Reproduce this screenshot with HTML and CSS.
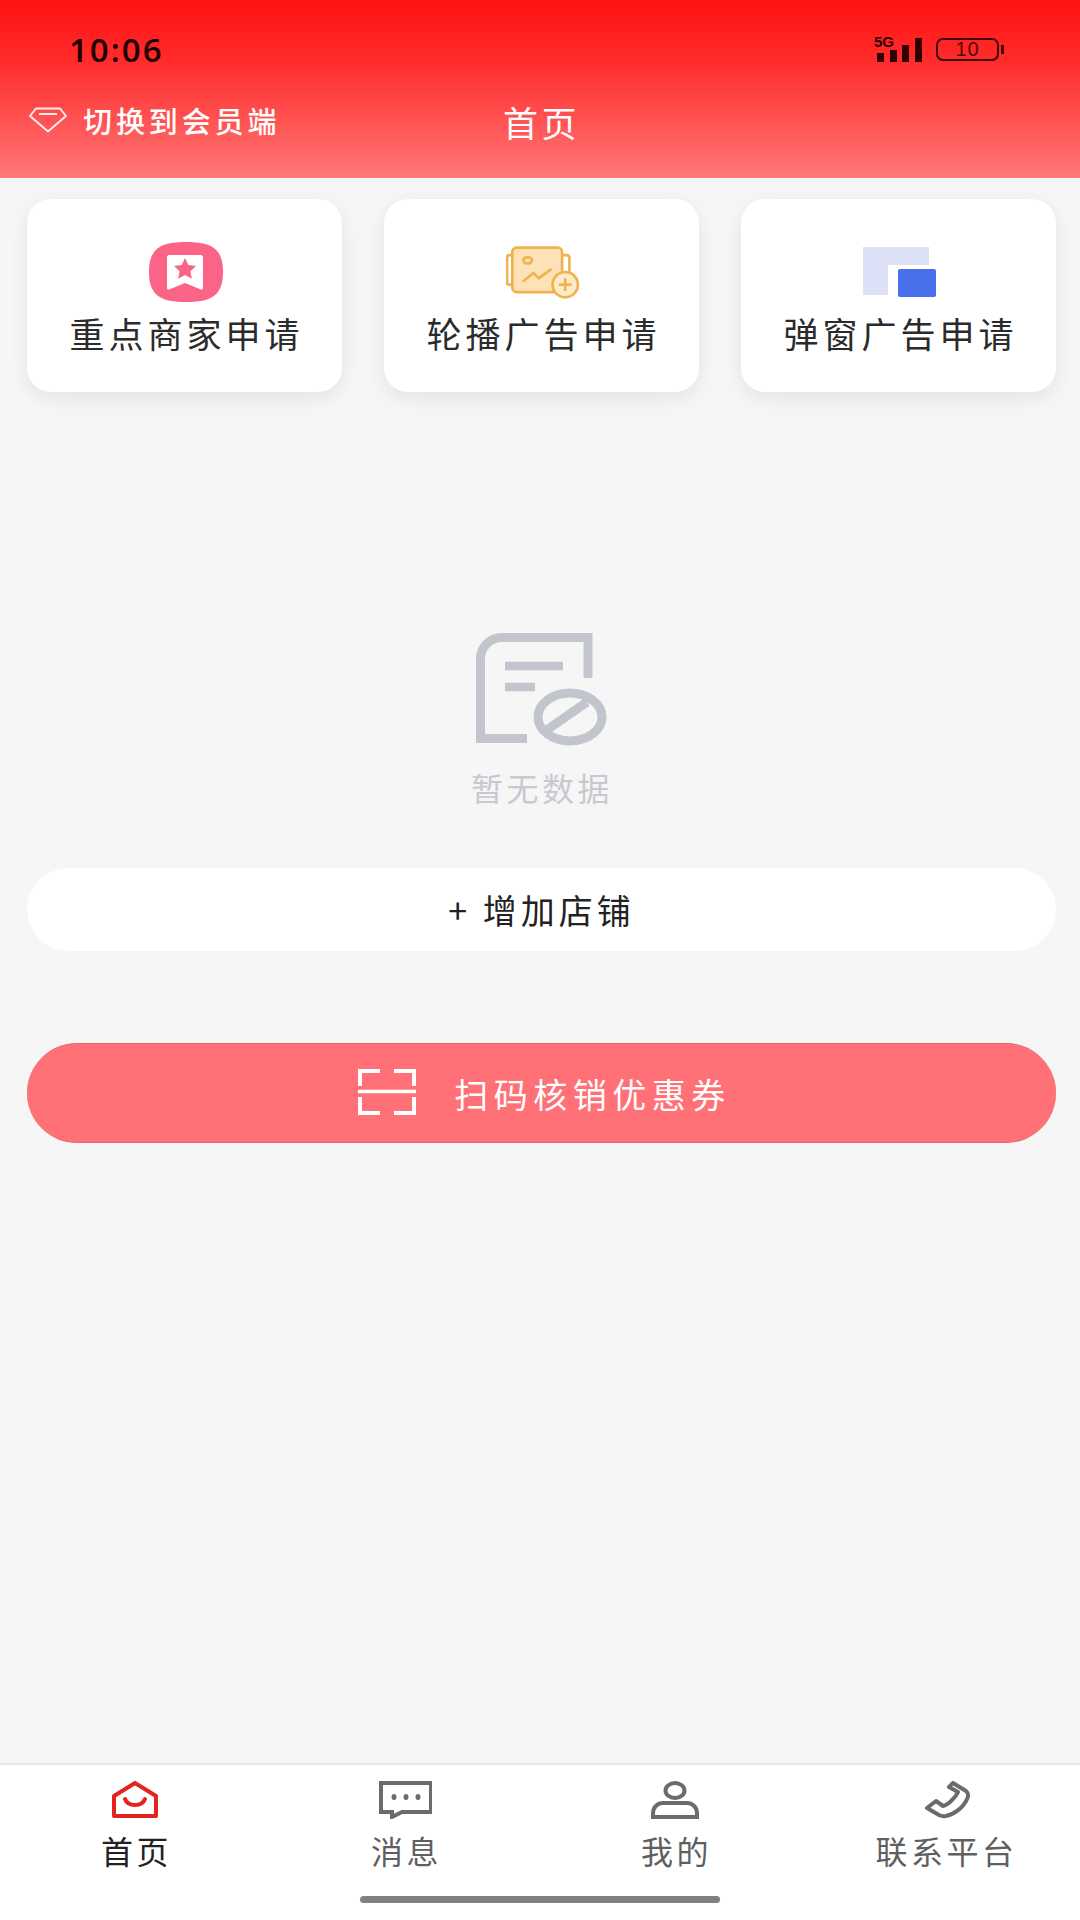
FILE: index.html
```html
<!DOCTYPE html>
<html lang="zh-CN">
<head>
<meta charset="utf-8">
<title>首页</title>
<link rel="stylesheet" href="styles.css">
</head>
<body>
<div class="page">
  <header class="header">
    <div class="status">
      <span class="time">10:06</span>
      <div class="status-right">
        <div class="signal">
          <span class="five-g">5G</span>
          <div class="bars"><i class="b1"></i><i class="b2"></i><i class="b3"></i><i class="b4"></i></div>
        </div>
        <div class="battery"><span class="battery-level">10</span></div>
        <span class="nub"></span>
      </div>
    </div>
    <div class="nav">
      <div class="switch">
        <svg class="diamond" viewBox="0 0 38 26" fill="none" stroke="#ffecec" stroke-width="2" stroke-linejoin="round"><path d="M7 1.500h24L37 9 19 24.500 1 9z"/><path d="M10 7h18"/></svg>
        <span>切换到会员端</span>
      </div>
      <div class="title">首页</div>
    </div>
  </header>

  <section class="cards">
    <div class="card">
      <svg class="card-icon" viewBox="0 0 74 60"><path d="M37 0C62 0 74 6 74 30S62 60 37 60 0 54 0 30 12 0 37 0z" fill="#fb6487"/><path d="M20 13h32c1 0 2 1 2 2v31c0 1-1 2-2 1.500L36 41 20 47.500c-1 .5-2-.5-2-1.500V15c0-1 1-2 2-2z" fill="#fff"/><path d="M36 16l3.300 7 7.700 1-5.600 5.200 1.500 7.600-6.900-3.800-6.900 3.800 1.500-7.600L25 24l7.700-1z" fill="#fb6487"/></svg>
      <span class="card-label">重点商家申请</span>
    </div>
    <div class="card">
      <svg class="card-icon" viewBox="0 0 70 50" fill="none" stroke="#f0b24a" stroke-width="2.500"><path d="M6 9H3c-1.500 0-2 1-2 2v24c0 1.500.5 2 2 2h3"/><path d="M53 9h4c2 0 3 1 3 3v20"/><rect x="6" y="2" width="47" height="42" rx="4" fill="#fde2b8"/><ellipse cx="20.500" cy="14" rx="4" ry="3"/><path d="M16 34l10-8 5 5 12-9"/><circle cx="56" cy="37" r="12" fill="#fdeacb"/><path d="M50 37h12M56 31v12"/></svg>
      <span class="card-label">轮播广告申请</span>
    </div>
    <div class="card">
      <svg class="card-icon" viewBox="0 0 74 50"><path d="M0 0h66v18H25v30H0z" fill="#dde1f8"/><rect x="35" y="22" width="38" height="28" rx="2" fill="#4a6fec"/></svg>
      <span class="card-label">弹窗广告申请</span>
    </div>
  </section>

  <section class="empty">
    <svg class="empty-icon" viewBox="0 0 132 114" fill="none">
      <path d="M112 45V4.500H26C14 4.500 4.500 14 4.500 26v79.500H51" stroke="#c2c4ce" stroke-width="9"/>
      <path d="M29 33h58M29 54h30" stroke="#c2c4ce" stroke-width="8.500"/>
      <ellipse cx="94" cy="84" rx="32" ry="24" stroke="#c2c4ce" stroke-width="9"/>
      <path d="M68 99l43-30" stroke="#c2c4ce" stroke-width="9"/>
    </svg>
    <span class="empty-text">暂无数据</span>
  </section>

  <button class="add-btn">+ 增加店铺</button>

  <button class="scan-btn">
    <svg class="scan-icon" viewBox="0 0 58 46" fill="none" stroke="#fff" stroke-width="4"><path d="M22 2H2v15M36 2h20v15M2 28v16h20M56 28v16H36"/><path d="M0 22.500h58" stroke-width="3.500"/></svg>
    <span>扫码核销优惠券</span>
  </button>

  <div class="spacer"></div>

  <nav class="tabbar">
    <div class="tab active">
      <svg class="tab-icon" viewBox="0 0 54 38" fill="none" stroke="#e2231f" stroke-width="4" stroke-linejoin="round"><path d="M6 15L27 2l21 13v20H6z"/><path d="M17 18c3 8 17 8 20 0" stroke-linecap="round"/></svg>
      <span>首页</span>
    </div>
    <div class="tab">
      <svg class="tab-icon" viewBox="0 0 54 38" fill="none" stroke="#6b6b6b" stroke-width="4"><path d="M3 2h50v29H24l-10 5v-5H3z"/><g fill="#6b6b6b" stroke="none"><ellipse cx="16" cy="16" rx="2.500" ry="3"/><ellipse cx="28" cy="16" rx="2.500" ry="3"/><ellipse cx="40" cy="16" rx="2.500" ry="3"/></g></svg>
      <span>消息</span>
    </div>
    <div class="tab">
      <svg class="tab-icon" viewBox="0 0 54 38" fill="none" stroke="#6b6b6b" stroke-width="4"><ellipse cx="27" cy="9.500" rx="9.500" ry="7.500"/><path d="M5 36v-4c0-6 5-10 10-10h24c5 0 10 4 10 10v4z"/></svg>
      <span>我的</span>
    </div>
    <div class="tab">
      <svg class="tab-icon" viewBox="0 0 54 38" fill="none" stroke="#6b6b6b" stroke-width="4" stroke-linejoin="round"><path d="M35 2l13 8c2 1.500 2.500 4 1.500 7C46 26 37 33 28 35c-3 .5-5 0-7-1L9 27l9-7 7 5c5-1 13-9 15-14l-9-5z"/></svg>
      <span>联系平台</span>
    </div>
  </nav>
  <div class="home-bar"><span class="home-indicator"></span></div>
</div>
</body>
</html>
```

FILE: styles.css
```css
* { box-sizing: border-box; margin: 0; padding: 0; }
html, body { width: 1080px; height: 1920px; overflow: hidden; }
body { font-family: "Noto Sans CJK SC", "Noto Sans", sans-serif; background: #f6f6f6; }
.page { width: 1080px; height: 1920px; display: flex; flex-direction: column; }

.header { height: 178px; background: linear-gradient(180deg, #ff1111 0%, #ff2c2c 35%, #ff5555 70%, #ff7878 100%); flex: none; }
.status { height: 98px; padding: 0 76px 0 69px; display: flex; justify-content: space-between; align-items: center; }
.time { font-family: "Open Sans", sans-serif; font-size: 33px; font-weight: 600; letter-spacing: 2px; color: #200000; }
.status-right { display: flex; align-items: center; }
.signal { position: relative; width: 47px; height: 25px; margin-right: 15px; }
.five-g { position: absolute; left: 0; top: -1px; font-family: "Liberation Sans", sans-serif; font-weight: 700; font-size: 15px; line-height: 12px; color: #300000; }
.bars { position: absolute; left: 3px; bottom: 0; display: flex; align-items: flex-end; gap: 5.500px; }
.bars i { display: block; width: 7px; background: #300000; }
.b1 { height: 9px; } .b2 { height: 12px; } .b3 { height: 17px; } .b4 { height: 24px; }
.battery { width: 63px; height: 23px; border: 2.500px solid #400505; border-radius: 7px; display: flex; align-items: center; justify-content: center; }
.battery-level { font-family: "Liberation Sans", sans-serif; font-size: 20px; letter-spacing: 1px; color: #500a0a; }
.nub { width: 3px; height: 9px; margin-left: 2px; background: #400505; }

.nav { position: relative; height: 80px; }
.switch { position: absolute; left: 29px; top: 4px; display: flex; align-items: center; gap: 16px; color: #fff; font-size: 29px; font-weight: 500; letter-spacing: 3.900px; line-height: 36px; }
.diamond { width: 38px; height: 26px; }
.title { position: absolute; left: 3px; right: 0; top: 1px; text-align: center; color: #fff; font-size: 35px; letter-spacing: 3.500px; line-height: 46px; }

.cards { display: grid; grid-template-columns: repeat(3, 315px); gap: 42px; padding: 21px 24px 0 27px; flex: none; }
.card { height: 193px; background: #fff; border-radius: 24px; box-shadow: 0 6px 20px rgba(0,0,0,.08); display: flex; flex-direction: column; align-items: center; padding-top: 43px; }
.card-icon { height: 60px; width: 74px; margin-left: 3px; filter: blur(.6px); }
.card-label { margin-top: 9px; font-size: 35px; line-height: 44px; letter-spacing: 4px; margin-right: -4px; color: #2b2b2b; }

.empty { display: flex; flex-direction: column; align-items: center; padding-top: 241px; flex: none; }
.empty-icon { width: 132px; height: 114px; margin: 0 0 -4px 3px; }
.empty-text { margin-top: 24px; font-size: 32px; line-height: 40px; letter-spacing: 3.500px; color: #c8c9d0; margin-right: -4px; }

.add-btn { margin: 61px 24px 0 27px; height: 83px; border: 0; border-radius: 42px; background: #fff; font: inherit; font-size: 34px; letter-spacing: 4px; color: #222; flex: none; }

.scan-btn { margin: 92px 24px 0 27px; height: 100px; padding-left: 6px; border: 1px solid #de6c72; border-left: 0; border-right: 0; border-radius: 50px; background: #ff7176; color: #fff; font: inherit; font-size: 34px; letter-spacing: 5.500px; display: flex; align-items: center; justify-content: center; gap: 38px; flex: none; }
.scan-btn span { margin-top: 1px; }
.scan-icon { width: 58px; height: 46px; margin-top: -2px; }

.spacer { flex: 1; }

.tabbar { display: grid; grid-template-columns: repeat(4, 270px); height: 117px; background: #fff; border-top: 2px solid #e6e6e6; flex: none; }
.tab { display: flex; flex-direction: column; align-items: center; padding-top: 16px; font-size: 32px; letter-spacing: 3.500px; color: #5f5f5f; line-height: 40px; }
.tab span { margin-top: 11px; margin-right: -3px; }
.tab.active { color: #222; }
.tab-icon { height: 38px; width: 54px; }
.home-bar { height: 40px; background: #fff; display: flex; justify-content: center; padding-top: 16px; flex: none; }
.home-indicator { width: 360px; height: 7px; border-radius: 4px; background: #808080; }
```
